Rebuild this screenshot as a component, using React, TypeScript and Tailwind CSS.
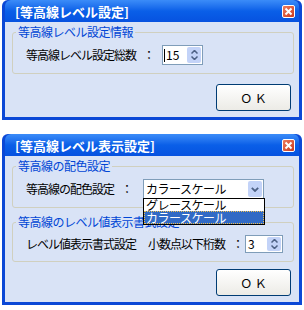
import React from "react";

const font = "font-['Noto_Sans_CJK_JP','Noto_Sans_CJK_SC',sans-serif]";

const CloseButton = () => (
  <div className="flex h-[13px] w-[13px] items-center justify-center rounded-[2px] border border-white bg-linear-to-br from-[#ef7b5d] to-[#c9381b]">
    <svg width="9" height="9" viewBox="0 0 9 9">
      <path d="M1.5 1.5 L7.5 7.5 M7.5 1.5 L1.5 7.5" stroke="white" strokeWidth="2" />
    </svg>
  </div>
);

const Window = ({ title, children }: { title: string; children: React.ReactNode }) => (
  <div className="w-[300px] rounded-t-[6px] bg-[#0b48d6] px-[3px] pb-[3px]">
    <div className="flex h-[22px] items-center justify-between rounded-t-[6px] bg-linear-to-b from-[#3b8cf8] via-[#0a5fe8] to-[#0752e0] pl-[10px] pr-[4px]">
      <span className="text-[13px] font-bold leading-none text-white">{title}</span>
      <CloseButton />
    </div>
    <div className="bg-[#d9e3f6] px-[7px] pt-[3px] pb-[6px]">{children}</div>
  </div>
);

const Group = ({ label, children, className = "" }: { label: string; children: React.ReactNode; className?: string }) => (
  <fieldset className={`rounded-[3px] border border-[#d0d0bf] ${className}`}>
    <legend className="ml-[3px] px-[2px] text-[12px] leading-[14px] tracking-[-0.5px] text-[#0046d5]">{label}</legend>
    {children}
  </fieldset>
);

const SpinArrows = ({ h }: { h: number }) => (
  <div
    className="ml-auto mr-[1px] flex w-[14px] flex-col items-center justify-center gap-[2px] rounded-[2px] bg-[#c3d3f8]"
    style={{ height: h }}
  >
    <svg width="7" height="4" viewBox="0 0 7 4">
      <path d="M0.5 3.5 L3.5 0.5 L6.5 3.5" stroke="#4d6185" strokeWidth="1.5" fill="none" />
    </svg>
    <svg width="7" height="4" viewBox="0 0 7 4">
      <path d="M0.5 0.5 L3.5 3.5 L6.5 0.5" stroke="#4d6185" strokeWidth="1.5" fill="none" />
    </svg>
  </div>
);

const OkButton = () => (
  <button className="ml-auto flex h-[27px] w-[75px] items-center justify-center rounded-[3px] border border-[#003c74] bg-linear-to-b from-white to-[#ecebe6] text-[12px] leading-none text-black">
    Ｏ Ｋ
  </button>
);

const label = "whitespace-nowrap text-[12px] leading-[14px] tracking-[-1px] text-black";

const Colon = () => <span className="ml-[7px]">：</span>;

export default function App() {
  return (
    <div className={`flex min-h-[310px] w-[304px] flex-col gap-[14px] bg-white px-[2px] ${font}`}>
      <Window title="[等高線レベル設定]">
        <Group label="等高線レベル設定情報" className="mr-[-2px]">
          <div className="flex items-center pl-[13px] pt-[6px] pb-[8px]">
            <span className={`w-[136px] ${label}`}>
              等高線レベル設定総数
              <Colon />
            </span>
            <div className="flex h-[20px] w-[41px] items-center border border-[#7f9db9] bg-white pl-[1px]">
              <span className="h-[13px] w-px bg-black" />
              <span className="ml-px text-[12px] leading-none">15</span>
              <SpinArrows h={16} />
            </div>
          </div>
        </Group>
        <div className="mt-[10px] flex pr-[1px]">
          <OkButton />
        </div>
      </Window>

      <Window title="[等高線レベル表示設定]">
        <Group label="等高線の配色設定" className="mr-[-2px]">
          <div className="flex items-center pl-[13px] pt-[6px] pb-[8px]">
            <span className={`w-[117px] ${label}`}>
              等高線の配色設定
              <Colon />
            </span>
            <div className="relative flex h-[20px] w-[121px] items-center border border-[#7f9db9] bg-white pl-[2px]">
              <span className="text-[12px] leading-none tracking-[-0.5px]">カラースケール</span>
              <div className="ml-auto mr-[1px] flex h-[16px] w-[14px] items-center justify-center rounded-[2px] bg-[#c3d3f8]">
                <svg width="8" height="5" viewBox="0 0 8 5">
                  <path d="M0.8 0.8 L4 4 L7.2 0.8" stroke="#4d6185" strokeWidth="1.8" fill="none" />
                </svg>
              </div>
              <div className="absolute left-[-1px] top-[18px] z-10 w-[122px] border border-black bg-white">
                <div className="h-[12px] px-[2px] text-[12px] leading-[12px] tracking-[-0.5px] text-black">グレースケール</div>
                <div className="h-[13px] border border-dotted border-[#f0c050] bg-[#316ac5] px-[1px] text-[12px] leading-[11px] tracking-[-0.5px] text-white">
                  カラースケール
                </div>
              </div>
            </div>
          </div>
        </Group>
        <Group label="等高線のレベル値表示書式設定" className="mt-[7px] mr-[-2px]">
          <div className="flex items-center pl-[13px] pt-[6px] pb-[8px]">
            <span className={`w-[122px] ${label}`}>レベル値表示書式設定</span>
            <span className={`w-[97px] ${label}`}>
              小数点以下桁数
              <Colon />
            </span>
            <div className="flex h-[18px] w-[38px] items-center border border-[#7f9db9] bg-white pl-[2px]">
              <span className="text-[12px] leading-none">3</span>
              <SpinArrows h={14} />
            </div>
          </div>
        </Group>
        <div className="mt-[7px] flex pr-[1px]">
          <OkButton />
        </div>
      </Window>
    </div>
  );
}
